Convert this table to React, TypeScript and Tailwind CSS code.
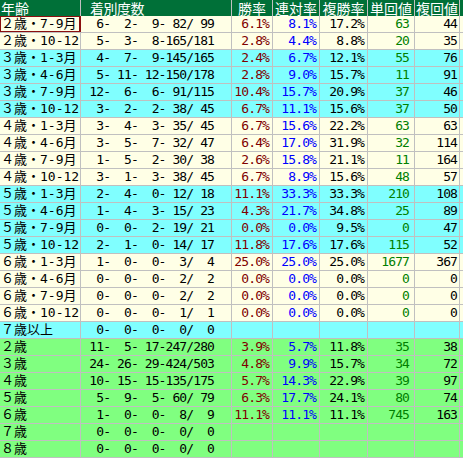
import React from "react";

type Row = {
  l: string;
  s: number[];
  p?: [string, string, string];
  r?: [number, number];
  bg: string;
  sel?: boolean;
};

const CREAM = "bg-[#ffffe6]";
const CYAN = "bg-[#80ffff]";
const GREEN = "bg-[#80ff80]";

const rows: Row[] = [
  { l: "２歳・7-9月", s: [6, 2, 9, 82, 99], p: ["6.1", "8.1", "17.2"], r: [63, 44], bg: CREAM, sel: true },
  { l: "２歳・10-12", s: [5, 3, 8, 165, 181], p: ["2.8", "4.4", "8.8"], r: [20, 35], bg: CREAM },
  { l: "３歳・1-3月", s: [4, 7, 9, 145, 165], p: ["2.4", "6.7", "12.1"], r: [55, 76], bg: CYAN },
  { l: "３歳・4-6月", s: [5, 11, 12, 150, 178], p: ["2.8", "9.0", "15.7"], r: [11, 91], bg: CYAN },
  { l: "３歳・7-9月", s: [12, 6, 6, 91, 115], p: ["10.4", "15.7", "20.9"], r: [37, 46], bg: CYAN },
  { l: "３歳・10-12", s: [3, 2, 2, 38, 45], p: ["6.7", "11.1", "15.6"], r: [37, 50], bg: CYAN },
  { l: "４歳・1-3月", s: [3, 4, 3, 35, 45], p: ["6.7", "15.6", "22.2"], r: [63, 63], bg: CREAM },
  { l: "４歳・4-6月", s: [3, 5, 7, 32, 47], p: ["6.4", "17.0", "31.9"], r: [32, 114], bg: CREAM },
  { l: "４歳・7-9月", s: [1, 5, 2, 30, 38], p: ["2.6", "15.8", "21.1"], r: [11, 164], bg: CREAM },
  { l: "４歳・10-12", s: [3, 1, 3, 38, 45], p: ["6.7", "8.9", "15.6"], r: [48, 57], bg: CREAM },
  { l: "５歳・1-3月", s: [2, 4, 0, 12, 18], p: ["11.1", "33.3", "33.3"], r: [210, 108], bg: CYAN },
  { l: "５歳・4-6月", s: [1, 4, 3, 15, 23], p: ["4.3", "21.7", "34.8"], r: [25, 89], bg: CYAN },
  { l: "５歳・7-9月", s: [0, 0, 2, 19, 21], p: ["0.0", "0.0", "9.5"], r: [0, 47], bg: CYAN },
  { l: "５歳・10-12", s: [2, 1, 0, 14, 17], p: ["11.8", "17.6", "17.6"], r: [115, 52], bg: CYAN },
  { l: "６歳・1-3月", s: [1, 0, 0, 3, 4], p: ["25.0", "25.0", "25.0"], r: [1677, 367], bg: CREAM },
  { l: "６歳・4-6月", s: [0, 0, 0, 2, 2], p: ["0.0", "0.0", "0.0"], r: [0, 0], bg: CREAM },
  { l: "６歳・7-9月", s: [0, 0, 0, 2, 2], p: ["0.0", "0.0", "0.0"], r: [0, 0], bg: CREAM },
  { l: "６歳・10-12", s: [0, 0, 0, 1, 1], p: ["0.0", "0.0", "0.0"], r: [0, 0], bg: CREAM },
  { l: "７歳以上", s: [0, 0, 0, 0, 0], bg: CYAN },
  { l: "２歳", s: [11, 5, 17, 247, 280], p: ["3.9", "5.7", "11.8"], r: [35, 38], bg: GREEN },
  { l: "３歳", s: [24, 26, 29, 424, 503], p: ["4.8", "9.9", "15.7"], r: [34, 72], bg: GREEN },
  { l: "４歳", s: [10, 15, 15, 135, 175], p: ["5.7", "14.3", "22.9"], r: [39, 97], bg: GREEN },
  { l: "５歳", s: [5, 9, 5, 60, 79], p: ["6.3", "17.7", "24.1"], r: [80, 74], bg: GREEN },
  { l: "６歳", s: [1, 0, 0, 8, 9], p: ["11.1", "11.1", "11.1"], r: [745, 163], bg: GREEN },
  { l: "７歳", s: [0, 0, 0, 0, 0], bg: GREEN },
  { l: "８歳", s: [0, 0, 0, 0, 0], bg: GREEN },
];

const pad3 = (n: number) => String(n).padStart(3, " ");
const fmt = (s: number[]) =>
  `${pad3(s[0])}-${pad3(s[1])}-${pad3(s[2])}-${pad3(s[3])}/${pad3(s[4])}`;

const MONO =
  "font-['DejaVu_Sans_Mono','Noto_Sans_CJK_JP',monospace] text-[13px] tracking-[-0.9px] leading-[16px] whitespace-pre text-right";
const CELL = "h-full border-r border-[#c0c0c0] flex items-center overflow-hidden";

export default function App() {
  return (
    <div className="w-[463px] h-[458px] overflow-hidden bg-white">
      {/* Header */}
      <div className="flex h-[16px] bg-[#007038] text-white font-['Noto_Sans_CJK_JP',sans-serif] text-[14px] leading-[16px]">
        <div className="w-[81px] h-full border-r border-[#c0c0c0] pl-[1px] flex items-center">年齢</div>
        <div className="w-[151px] h-full border-r border-[#c0c0c0] pl-[9px] flex items-center tracking-[-0.5px]">着別度数</div>
        <div className="w-[41px] h-full border-r border-[#c0c0c0] flex items-center justify-center">勝率</div>
        <div className="w-[47px] h-full border-r border-[#c0c0c0] flex items-center justify-center whitespace-nowrap overflow-visible">連対率</div>
        <div className="w-[48px] h-full border-r border-[#c0c0c0] flex items-center justify-center whitespace-nowrap">複勝率</div>
        <div className="w-[47px] h-full border-r border-[#c0c0c0] flex items-center justify-center whitespace-nowrap">単回値</div>
        <div className="w-[45px] h-full border-r border-[#c0c0c0] flex items-center justify-center whitespace-nowrap">複回値</div>
        <div className="flex-1 h-full" />
      </div>
      {rows.map((row, i) => (
        <div key={i} className={`flex h-[17px] border-b border-[#c0c0c0] ${row.bg}`}>
          <div
            className={`w-[81px] ${CELL} pl-[1px] text-black font-['DejaVu_Sans_Mono','Noto_Sans_CJK_JP',monospace] text-[13px] leading-[16px] whitespace-pre ${
              row.sel ? "shadow-[inset_0_0_0_1px_#8b1010] border-r-[#8b1010]" : ""
            }`}
          >
            {row.l}
          </div>
          <div className={`w-[151px] ${CELL} justify-end pr-[17px] text-black ${MONO}`}>{fmt(row.s)}</div>
          <div className={`w-[41px] ${CELL} justify-end pr-[3px] text-[#800000] ${MONO}`}>
            {row.p ? `${row.p[0]}%` : ""}
          </div>
          <div className={`w-[47px] ${CELL} justify-end pr-[3px] text-[#0000ff] ${MONO}`}>
            {row.p ? `${row.p[1]}%` : ""}
          </div>
          <div className={`w-[48px] ${CELL} justify-end pr-[3px] text-black ${MONO}`}>
            {row.p ? `${row.p[2]}%` : ""}
          </div>
          <div className={`w-[47px] ${CELL} justify-end pr-[5px] text-[#008000] ${MONO}`}>
            {row.r ? String(row.r[0]) : ""}
          </div>
          <div className={`w-[45px] ${CELL} justify-end pr-[2px] text-black ${MONO}`}>
            {row.r ? String(row.r[1]) : ""}
          </div>
          <div className="flex-1 h-full" />
        </div>
      ))}
    </div>
  );
}
